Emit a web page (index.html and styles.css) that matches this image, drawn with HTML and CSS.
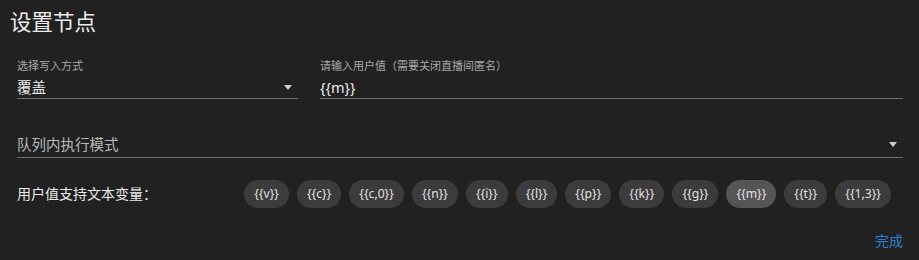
FILE: index.html
```html
<!DOCTYPE html>
<html lang="zh">
<head>
<meta charset="utf-8">
<link rel="stylesheet" href="styles.css">
</head>
<body>
<div class="dialog">
  <div class="title">设置节点</div>
  <div class="content">
    <div class="row-fields">
      <div class="field">
        <div class="label">选择写入方式</div>
        <div class="control">
          <span class="value">覆盖</span>
          <span class="arrow"></span>
        </div>
      </div>
      <div class="field">
        <div class="label">请输入用户值（需要关闭直播间匿名）</div>
        <div class="control">
          <span class="value">{{m}}</span>
        </div>
      </div>
    </div>
    <div class="field field-full">
      <div class="label label-empty"></div>
      <div class="control control-tall">
        <span class="value placeholder">队列内执行模式</span>
        <span class="arrow"></span>
      </div>
    </div>
    <div class="chips-row">
      <div class="chips-label">用户值支持文本变量：</div>
      <div class="chips">
        <span class="chip">{{v}}</span>
        <span class="chip">{{c}}</span>
        <span class="chip">{{c,0}}</span>
        <span class="chip">{{n}}</span>
        <span class="chip">{{i}}</span>
        <span class="chip">{{l}}</span>
        <span class="chip">{{p}}</span>
        <span class="chip">{{k}}</span>
        <span class="chip">{{g}}</span>
        <span class="chip chip-active">{{m}}</span>
        <span class="chip">{{t}}</span>
        <span class="chip">{{1,3}}</span>
      </div>
    </div>
    <div class="actions">
      <span class="btn">完成</span>
    </div>
  </div>
</div>
</body>
</html>
```

FILE: styles.css
```css
* { box-sizing: border-box; }
html, body {
  margin: 0;
  padding: 0;
  background: #212121;
}
body {
  font-family: "Noto Sans", "Noto Sans CJK SC", sans-serif;
  color: #e6e6e6;
  width: 919px;
  height: 260px;
  overflow: hidden;
}
.dialog {
  padding-top: 7px;
}
.title {
  font-size: 21.5px;
  line-height: 30px;
  padding-left: 10px;
  color: #ececec;
}
.content {
  padding: 0 16px 0 17px;
}
.row-fields {
  display: grid;
  grid-template-columns: 281px 1fr;
  column-gap: 22px;
  margin-top: 22px;
}
.field {
  display: flex;
  flex-direction: column;
}
.label {
  font-size: 11px;
  line-height: 14px;
  height: 14px;
  color: #a9a9a9;
  white-space: nowrap;
}
.control {
  margin-top: 4px;
  display: flex;
  align-items: center;
  height: 22px;
  padding-bottom: 1px;
  border-bottom: 1px solid #6e6e6e;
}
.control-tall {
  margin-top: 5px;
  height: 24px;
  padding-bottom: 3px;
}
.value {
  flex: 1;
  font-size: 14.5px;
  line-height: 20px;
  color: #ececec;
}
.placeholder {
  color: #b9b9b9;
}
.arrow {
  width: 0;
  height: 0;
  border-left: 4.5px solid transparent;
  border-right: 4.5px solid transparent;
  border-top: 5px solid #d0d0d0;
  margin-right: 6px;
}
.field-full {
  margin-top: 16px;
}
.chips-row {
  display: flex;
  align-items: center;
  margin-top: 22px;
}
.chips-label {
  font-size: 14px;
  line-height: 20px;
  color: #ececec;
}
.chips {
  display: flex;
  gap: 8px;
  margin-left: auto;
  margin-right: 12px;
}
.chip {
  height: 28px;
  line-height: 28px;
  padding: 0 10px;
  border-radius: 14px;
  background: #3c3c3c;
  color: #e2e2e2;
  font-size: 12.2px;
  white-space: nowrap;
}
.chip-active {
  background: #555555;
}
.actions {
  display: flex;
  justify-content: flex-end;
  margin-top: 23px;
}
.btn {
  font-size: 14px;
  line-height: 20px;
  color: #2f80d1;
}
```
